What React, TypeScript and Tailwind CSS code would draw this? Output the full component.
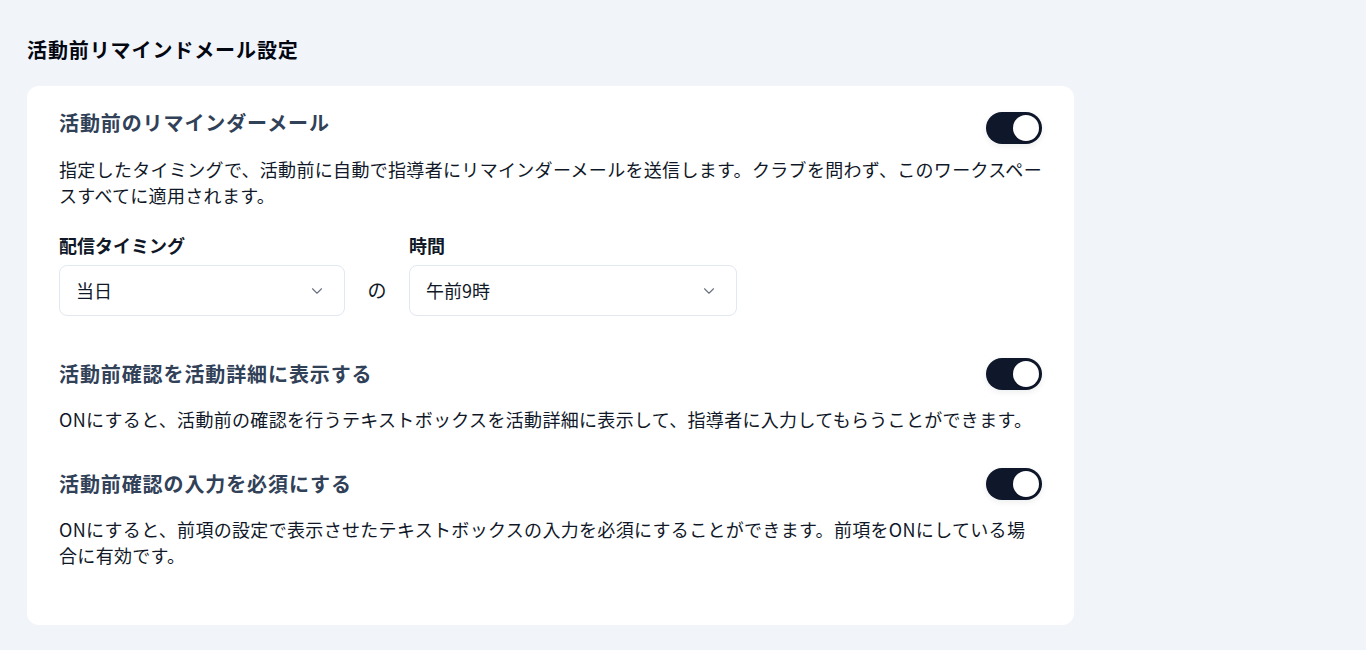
import { ChevronDown } from 'lucide-react'

function Toggle() {
  return (
    <button
      type="button"
      role="switch"
      aria-checked="true"
      className="w-14 h-8 shrink-0 rounded-full bg-slate-900 flex items-center justify-end px-[3px] shadow-[0_2px_6px_rgba(15,23,42,0.08)]"
    >
      <span className="w-[26px] h-[26px] rounded-full bg-white shadow-sm" />
    </button>
  )
}

function Select({ value, width }: { value: string; width: string }) {
  return (
    <div
      className={`${width} h-[51px] rounded-lg border border-slate-200 bg-white flex items-center justify-between pl-4 pr-[18px]`}
    >
      <span className="text-[18px] text-gray-900">{value}</span>
      <ChevronDown className="w-[18px] h-[18px] text-gray-500" strokeWidth={1.5} />
    </div>
  )
}

export default function App() {
  return (
    <div
      className="min-h-[650px] bg-slate-100 px-[27px] pt-9 pb-6"
      style={{ fontFamily: '"Noto Sans CJK JP", "Noto Sans", sans-serif' }}
    >
      <h1 className="text-xl leading-7 font-bold tracking-[0.9px] text-gray-950 mb-[22px]">活動前リマインドメール設定</h1>

      <div className="w-[1047px] bg-white rounded-xl px-8 pt-[26px] pb-[57px]">
        {/* 活動前のリマインダーメール */}
        <div className="flex items-start justify-between">
          <h2 className="text-xl leading-[22px] font-bold tracking-[0.9px] text-slate-700">活動前のリマインダーメール</h2>
          <Toggle />
        </div>
        <p className="mt-3 text-[18px] leading-[26px] tracking-[0.32px] text-gray-900">
          指定したタイミングで、活動前に自動で指導者にリマインダーメールを送信します。クラブを問わず、このワークスペースすべてに適用されます。
        </p>

        <div className="mt-[25px] flex items-end gap-[22px]">
          <div className="flex flex-col">
            <label className="text-[18px] leading-6 font-bold text-gray-900">配信タイミング</label>
            <div className="mt-2">
              <Select value="当日" width="w-[286px]" />
            </div>
          </div>
          <div className="h-[51px] w-5 flex items-center justify-center text-[19px] text-gray-900">の</div>
          <div className="flex flex-col">
            <label className="text-[18px] leading-6 font-bold text-gray-900">時間</label>
            <div className="mt-2">
              <Select value="午前9時" width="w-[328px]" />
            </div>
          </div>
        </div>

        {/* 活動前確認を活動詳細に表示する */}
        <div className="mt-[42px] flex items-center justify-between">
          <h2 className="text-xl leading-7 font-bold tracking-[0.9px] text-slate-700">活動前確認を活動詳細に表示する</h2>
          <Toggle />
        </div>
        <p className="mt-4 text-[18px] leading-[26px] tracking-[0.32px] text-gray-900">
          ONにすると、活動前の確認を行うテキストボックスを活動詳細に表示して、指導者に入力してもらうことができます。
        </p>

        {/* 活動前確認の入力を必須にする */}
        <div className="mt-9 flex items-center justify-between">
          <h2 className="text-xl leading-7 font-bold tracking-[0.9px] text-slate-700">活動前確認の入力を必須にする</h2>
          <Toggle />
        </div>
        <p className="mt-4 text-[18px] leading-[26px] tracking-[0.32px] text-gray-900">
          ONにすると、前項の設定で表示させたテキストボックスの入力を必須にすることができます。前項をONにしている場合に有効です。
        </p>
      </div>
    </div>
  )
}
